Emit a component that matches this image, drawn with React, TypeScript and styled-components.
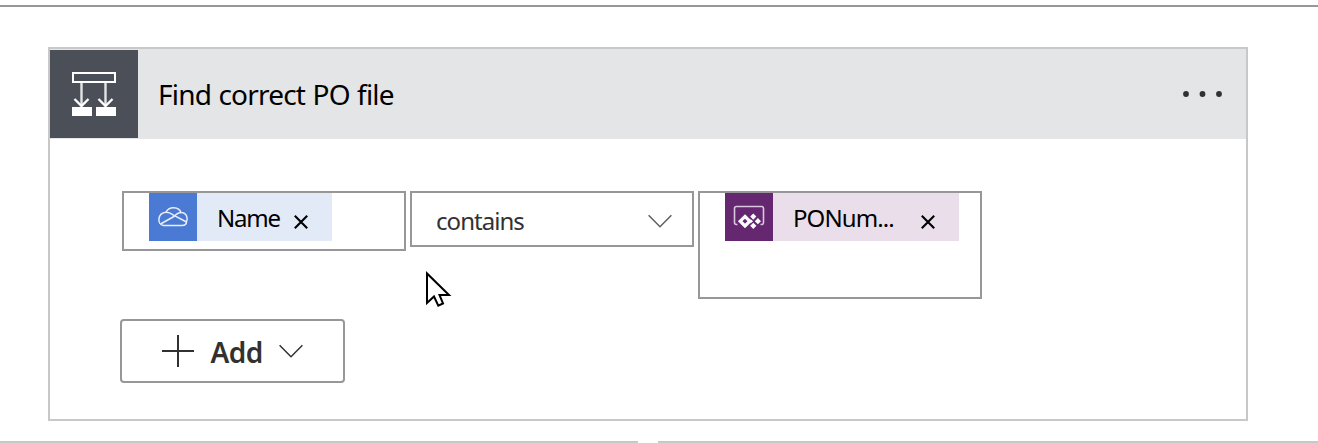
import React from "react";
import styled, { createGlobalStyle } from "styled-components";

const GlobalStyle = createGlobalStyle`
  * { box-sizing: border-box; }
  body {
    margin: 0;
    background: #fff;
    font-family: "Noto Sans", "Open Sans", sans-serif;
    color: #000;
  }
  svg { display: block; flex: none; }
`;

const Page = styled.div`
  position: relative;
  display: flex;
  flex-direction: column;
  height: 443px;
  padding-top: 5px;
  overflow: hidden;
`;

const TopRule = styled.div`
  height: 2px;
  flex: none;
  background: #979797;
`;

const Card = styled.section`
  width: 1200px;
  height: 374px;
  margin: 40px 0 20px 48px;
  flex: none;
  border: 2px solid #c8c8c8;
`;

const Header = styled.header`
  display: flex;
  align-items: center;
  height: 90px;
  padding-right: 22.5px;
  background: #e3e5e6;
`;

const HeaderIcon = styled.div`
  display: grid;
  place-items: center;
  width: 88px;
  height: 88px;
  background: #4b4f58;
`;

const Label = styled.span<{ $size: number; $spacing?: number; $weight?: number; $color?: string }>`
  font-size: ${(p) => p.$size}px;
  line-height: ${(p) => p.$size + 8}px;
  letter-spacing: ${(p) => p.$spacing ?? 0}px;
  font-weight: ${(p) => p.$weight ?? 400};
  color: ${(p) => p.$color ?? "#000"};
  white-space: nowrap;
`;

const Title = styled.div`
  flex: 1;
  display: flex;
  padding: 0 0 0 20px;
  word-spacing: 0.9px;
`;

const Body = styled.div`
  display: flex;
  flex-direction: column;
  align-items: flex-start;
  padding: 52px 0 0 70px;
`;

const ConditionRow = styled.div`
  display: flex;
  align-items: flex-start;
  gap: 4px;
  height: 128px;
  padding-left: 2px;
`;

const Field = styled.div<{ $height: number }>`
  display: flex;
  align-items: flex-start;
  width: 284px;
  height: ${(p) => p.$height}px;
  padding-left: 25px;
  border: 2px solid #979797;
`;

const Select = styled(Field)`
  align-items: center;
  justify-content: space-between;
  padding: 3px 20px 0 24px;
`;

const Token = styled.div<{ $width: number; $tint: string }>`
  display: flex;
  width: ${(p) => p.$width}px;
  height: 48px;
  background: ${(p) => p.$tint};
`;

const TokenIcon = styled.div<{ $fill: string }>`
  width: 48px;
  height: 48px;
  flex: none;
  background: ${(p) => p.$fill};
`;

const TokenText = styled.div`
  flex: 1;
  display: flex;
  justify-content: space-between;
  padding: 9px 24px 0 20px;
`;

const AddButton = styled.button`
  display: flex;
  align-items: center;
  width: 225px;
  height: 64px;
  padding: 0 0 0 40px;
  border: 2px solid #979797;
  border-radius: 4px;
  background: #fff;
  font-family: inherit;
`;

const AddLabel = styled.div`
  display: flex;
  width: 84.5px;
  padding: 1px 0 0 16.5px;
`;

const BottomRules = styled.div`
  display: grid;
  grid-template-columns: 638px 1fr;
  gap: 20px;
  flex: none;
`;

const Rule = styled.div`
  height: 2px;
  background: #c8c8c8;
`;

const Pointer = styled.svg`
  position: absolute;
  left: 425px;
  top: 269px;
`;

const ConditionIcon = () => (
  <svg width="46" height="46" viewBox="0 0 46 46" fill="none" stroke="#fff">
    <rect x="2" y="2" width="42" height="9" strokeWidth="2" />
    <path d="M10.500 12v23M34.500 12v23" strokeWidth="2.400" stroke="#e4e4e6" />
    <path d="M3.500 28l7 7 7-7M27.500 28l7 7 7-7" strokeWidth="2.300" />
    <path d="M1 36h20v9H1zM25 36h20v9H25z" fill="#fff" stroke="none" />
  </svg>
);

const CloudIcon = () => (
  <svg width="48" height="48" viewBox="0 0 48 48" fill="none" stroke="#e8effb" strokeWidth="1.500" strokeLinejoin="round">
    <path d="M14.500 32.500C7.500 31.500 8.500 20 17 19.200C20 13 30 13.500 32 19.500C38 19.500 39 26 37.500 28.500C37.500 31 36 32.500 33 32.500Z" />
    <path d="M17 19.200c3 0 5 1 7 2.600L37.500 29M11.500 31L25 23.500c2-2 4-4 7-4" />
  </svg>
);

const VariableIcon = () => (
  <svg width="48" height="48" viewBox="0 0 48 48" fill="none">
    <path d="M12.500 31.500h-1q-2 0-2-2V15.500q0-2 2-2h25q2 0 2 2v14q0 2-2 2h-1" stroke="#d9c8dd" strokeWidth="1.600" />
    <path d="M20 23.500l4.800 4.700-4.800 4.700-4.800-4.700z" stroke="#fff" strokeWidth="3.200" />
    <path d="M28.300 20.500l3.100 3.100-3.100 3.100-3.100-3.100zM28.300 29.700l3.100 3.100-3.100 3.100-3.100-3.100zM32.900 25.100l3.100 3.100-3.100 3.100-3.100-3.100zM25.500 26l2.600 2.200-2.600 2.200z" fill="#fff" />
  </svg>
);

const CloseIcon = () => (
  <svg width="14" height="14" viewBox="0 0 14 14" style={{ marginTop: 13 }}>
    <path d="M.8.8l12.400 12.400M13.200.8L.8 13.200" stroke="#000" strokeWidth="2.100" />
  </svg>
);

const Chevron = ({ color }: { color: string }) => (
  <svg width="24" height="14" viewBox="0 0 24 14" fill="none">
    <path d="M.6 1.300L12 12.700 23.400 1.300" stroke={color} strokeWidth="1.500" />
  </svg>
);

const PlusIcon = () => (
  <svg width="32" height="32" viewBox="0 0 32 32">
    <path d="M16 0v32M0 16h32" stroke="#323130" strokeWidth="2" />
  </svg>
);

const MoreIcon = () => (
  <svg width="42" height="8" viewBox="0 0 42 8" fill="#323130">
    <circle cx="4" cy="4" r="2.900" />
    <circle cx="20.500" cy="4" r="2.900" />
    <circle cx="37" cy="4" r="2.900" />
  </svg>
);

export default function App() {
  return (
    <Page>
      <GlobalStyle />
      <TopRule />
      <Card>
        <Header>
          <HeaderIcon><ConditionIcon /></HeaderIcon>
          <Title><Label $size={28} $spacing={-0.8}>Find correct PO file</Label></Title>
          <MoreIcon />
        </Header>
        <Body>
          <ConditionRow>
            <Field $height={60}>
              <Token $width={183} $tint="#e3eaf7">
                <TokenIcon $fill="#4a7ad3"><CloudIcon /></TokenIcon>
                <TokenText>
                  <Label $size={24} $spacing={-1.2}>Name</Label>
                  <CloseIcon />
                </TokenText>
              </Token>
            </Field>
            <Select $height={56}>
              <Label $size={24} $spacing={-0.95} $color="#323130">contains</Label>
              <Chevron color="#605e5c" />
            </Select>
            <Field $height={108}>
              <Token $width={234} $tint="#e9deea">
                <TokenIcon $fill="#642770"><VariableIcon /></TokenIcon>
                <TokenText>
                  <Label $size={24} $spacing={-0.9}>PONum...</Label>
                  <CloseIcon />
                </TokenText>
              </Token>
            </Field>
          </ConditionRow>
          <AddButton>
            <PlusIcon />
            <AddLabel><Label $size={28} $spacing={-0.5} $weight={600} $color="#323130">Add</Label></AddLabel>
            <Chevron color="#323130" />
          </AddButton>
        </Body>
      </Card>
      <BottomRules><Rule /><Rule /></BottomRules>
      <Pointer width="28" height="40" viewBox="0 0 28 40">
        <path d="M2 4.500V34L9 27.500L13.300 36.700L18 34.400L14.500 26H24Z" fill="#fff" stroke="#000" strokeWidth="2" />
      </Pointer>
    </Page>
  );
}
